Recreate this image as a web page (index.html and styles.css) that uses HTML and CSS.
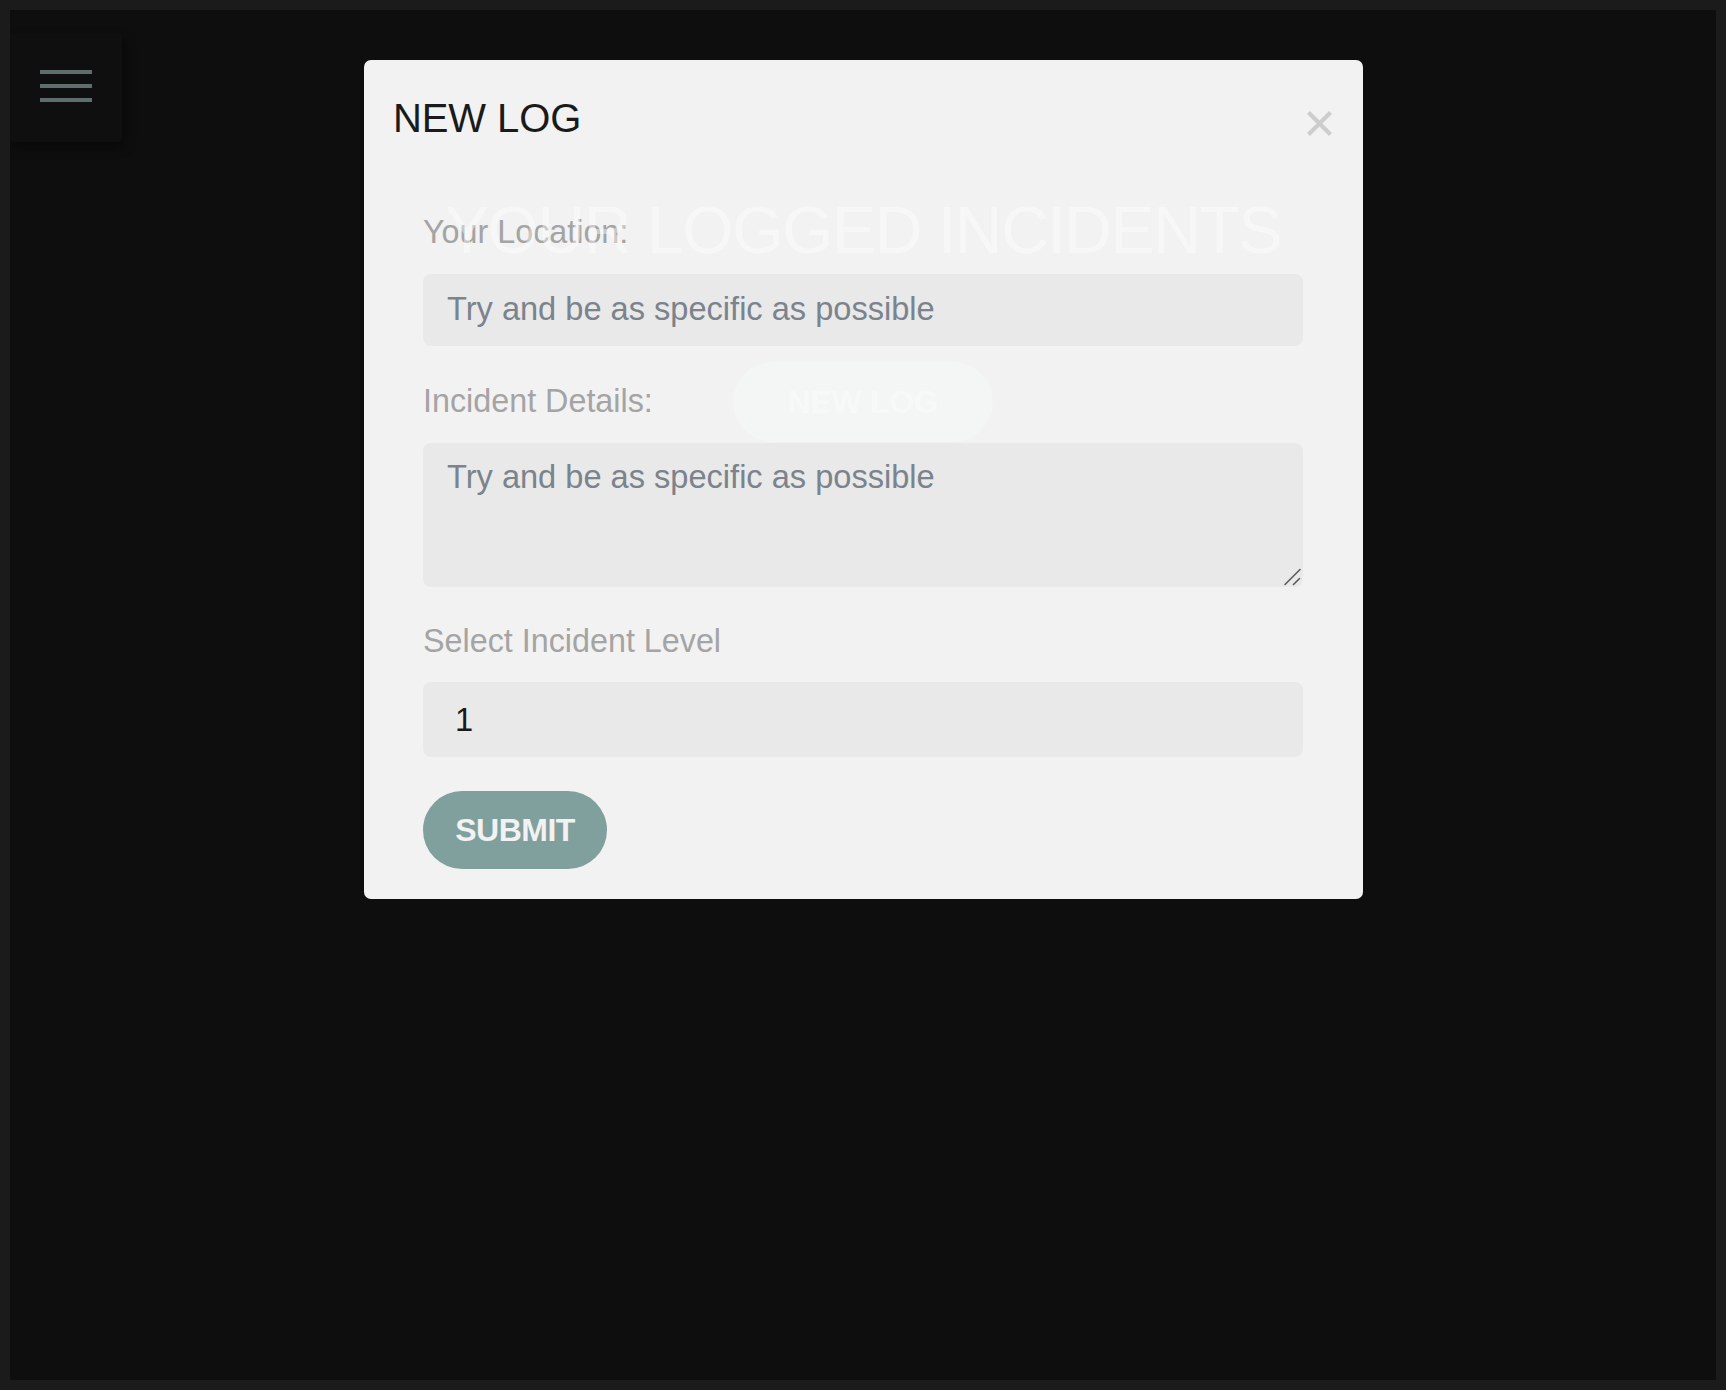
FILE: index.html
```html
<!DOCTYPE html>
<html lang="en">
<head>
<meta charset="utf-8">
<title>Your Logged Incidents</title>
<link rel="stylesheet" href="styles.css">
</head>
<body>
<div class="frame">
  <header class="topbar">
    <button class="menu-btn" aria-label="Menu">
      <span class="bar"></span>
      <span class="bar"></span>
      <span class="bar"></span>
    </button>
  </header>
  <main class="page">
    <h1 class="page-title">YOUR LOGGED INCIDENTS</h1>
    <button class="ghost-btn">NEW LOG</button>
  </main>

  <div class="modal" role="dialog" aria-labelledby="modal-title">
    <div class="modal-header">
      <h2 class="modal-title" id="modal-title">NEW LOG</h2>
      <button class="close-btn" aria-label="Close">
        <svg width="25" height="25" viewBox="0 0 25 25"><path d="M1.5 1.5 L23.5 23.5 M23.5 1.5 L1.5 23.5" stroke="#cdcdcd" stroke-width="4.2" fill="none"/></svg>
      </button>
    </div>
    <form class="log-form">
      <div class="field">
        <label class="field-label" for="loc">Your Location:</label>
        <input class="field-input" id="loc" type="text" placeholder="Try and be as specific as possible">
      </div>
      <div class="field">
        <label class="field-label" for="details">Incident Details:</label>
        <div class="area-wrap">
          <textarea class="field-area" id="details" placeholder="Try and be as specific as possible"></textarea>
          <svg class="resize-grip" width="18" height="18" viewBox="0 0 18 18"><path d="M1 16.5 L16 1.5 M9.5 16.5 L15.5 10.5" stroke="#5c5c5c" stroke-width="1.6" fill="none" stroke-linecap="round"/></svg>
        </div>
      </div>
      <div class="field field-last">
        <label class="field-label label-tight" for="level">Select Incident Level</label>
        <select class="field-select" id="level">
          <option>1</option>
          <option>2</option>
          <option>3</option>
          <option>4</option>
          <option>5</option>
        </select>
      </div>
      <button type="button" class="submit-btn">SUBMIT</button>
    </form>
  </div>
</div>
</body>
</html>
```

FILE: styles.css
```css
* { box-sizing: border-box; }

html, body {
  margin: 0;
  padding: 0;
}

body {
  background: #1b1b1b;
  padding: 10px;
  font-family: "Liberation Sans", Arial, Helvetica, sans-serif;
}

.frame {
  position: relative;
  background: #0e0e0e;
  height: 1370px;
  overflow: hidden;
}

.topbar {
  padding-top: 24px;
}

.menu-btn {
  display: flex;
  flex-direction: column;
  justify-content: center;
  align-items: center;
  gap: 10px;
  width: 112px;
  height: 108px;
  padding: 0 0 4px 0;
  border: none;
  background: #0f0f0f;
  box-shadow: 2px 5px 12px rgba(0, 0, 0, 0.45);
  border-radius: 0 0 4px 0;
}

.menu-btn .bar {
  display: block;
  width: 52px;
  height: 4px;
  background: #5f6e6c;
}

.page {
  position: relative;
  z-index: 2;
  display: flex;
  flex-direction: column;
  align-items: center;
  pointer-events: none;
}

.page-title {
  margin: 55px 0 0 0;
  font-size: 66px;
  line-height: 66px;
  font-weight: normal;
  letter-spacing: -1.4px;
  color: rgba(255, 255, 255, 0.4);
}

.ghost-btn {
  margin-top: 99px;
  width: 260px;
  height: 80px;
  border: none;
  border-radius: 40px;
  background: rgba(250, 255, 255, 0.22);
  color: rgba(255, 255, 255, 0.35);
  font-family: "Liberation Sans", Arial, sans-serif;
  font-size: 32px;
  font-weight: bold;
  letter-spacing: -0.3px;
}

.modal {
  position: fixed;
  z-index: 1;
  top: 60px;
  left: 364px;
  width: 999px;
  background: #f2f2f2;
  border-radius: 7px;
  padding-bottom: 30px;
}

.modal-header {
  display: flex;
  justify-content: space-between;
  align-items: flex-start;
  padding: 38px 31px 0 29px;
}

.modal-title {
  margin: 0;
  font-size: 40px;
  line-height: 40px;
  font-weight: normal;
  color: #1a1a1a;
  letter-spacing: -0.1px;
}

.close-btn {
  margin-top: 13px;
  padding: 0;
  border: none;
  background: none;
  width: 25px;
  height: 25px;
  display: block;
}

.close-btn svg {
  display: block;
}

.log-form {
  width: 880px;
  margin: 0 0 0 59px;
  padding-top: 78px;
  display: flex;
  flex-direction: column;
  align-items: flex-start;
}

.field {
  width: 100%;
  display: flex;
  flex-direction: column;
  margin-bottom: 38.5px;
}

.field-last {
  margin-bottom: 34px;
}

.field-label {
  font-size: 32.3px;
  line-height: 32px;
  color: #a4a4a4;
  margin-bottom: 26px;
}

.label-tight {
  margin-bottom: 25px;
}

.field-input,
.field-area,
.field-select {
  width: 100%;
  border: none;
  outline: none;
  background: #e9e9e9;
  border-radius: 8px;
  font-family: "Liberation Sans", Arial, sans-serif;
  font-size: 32.6px;
  color: #1a1a1a;
  margin: 0;
}

.field-input {
  height: 72px;
  padding: 0 24px 3px 24px;
}

.area-wrap {
  position: relative;
  width: 100%;
}

.field-area {
  height: 144px;
  padding: 16px 24px;
  line-height: 36px;
  resize: none;
  display: block;
}

.resize-grip {
  position: absolute;
  right: 1px;
  bottom: 1px;
  display: block;
}

.field-input::placeholder,
.field-area::placeholder {
  color: #7b838c;
  opacity: 1;
}

.field-select {
  height: 75px;
  padding: 0 32px;
  -webkit-appearance: none;
  appearance: none;
}

.submit-btn {
  height: 78px;
  width: 184px;
  border: none;
  border-radius: 39px;
  background: #7fa09d;
  color: #f2f2f2;
  font-family: "Liberation Sans", Arial, sans-serif;
  font-size: 32px;
  font-weight: bold;
  letter-spacing: -0.5px;
  padding: 0;
}
```
